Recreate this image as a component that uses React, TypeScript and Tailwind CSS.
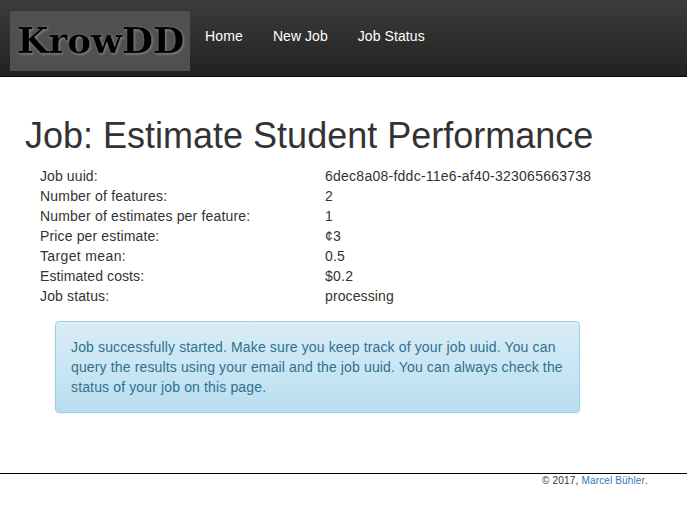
const details = [
  { label: 'Job uuid:', value: '6dec8a08-fddc-11e6-af40-323065663738', labelClass: 'tracking-[0.1px]', valueClass: 'tracking-[0.25px]' },
  { label: 'Number of features:', value: '2', labelClass: 'tracking-[0.19px]', valueClass: '' },
  { label: 'Number of estimates per feature:', value: '1', labelClass: 'tracking-[0.18px]', valueClass: '' },
  { label: 'Price per estimate:', value: '¢3', labelClass: 'tracking-[0.14px]', valueClass: 'tracking-[0.25px]' },
  { label: 'Target mean:', value: '0.5', labelClass: 'tracking-[0.36px]', valueClass: 'tracking-[0.2px]' },
  { label: 'Estimated costs:', value: '$0.2', labelClass: 'tracking-[0.09px]', valueClass: 'tracking-[0.25px]' },
  { label: 'Job status:', value: 'processing', labelClass: 'tracking-[0.14px]', valueClass: 'tracking-[0.12px]' },
];

function Logo() {
  return (
    <svg width="180" height="60" viewBox="0 0 180 60" role="img" aria-label="KrowDD" className="block bg-[#505050]">
      <defs>
        <filter id="glow" x="-10%" y="-20%" width="120%" height="150%">
          <feDropShadow dx="0.8" dy="0.9" stdDeviation="1.3" floodColor="#aaa" floodOpacity="0.65" />
        </filter>
      </defs>
      <g filter="url(#glow)">
        <text x="7.3" y="42.3" textLength="167" lengthAdjust="spacingAndGlyphs" fill="#000" stroke="#404040" strokeWidth="0.3" className="font-['DejaVu_Serif',serif] text-[36px] font-bold">KrowDD</text>
      </g>
    </svg>
  );
}

export default function App() {
  return (
    <div className="min-h-[505px] bg-white font-['Liberation_Sans',Arial,sans-serif] text-sm leading-5 text-[#333]">
      <nav className="flex h-[77px] items-start border-b border-[#080808] bg-linear-to-b from-[#3c3c3c] to-[#222] pt-[11px] pl-[10px] text-white">
        <Logo />
        <div className="flex gap-[30px] pt-[15px] pl-[15px]">
          <a className="tracking-[0.15px]">Home</a>
          <a className="tracking-[0.05px]">New Job</a>
          <a className="tracking-[0.08px]">Job Status</a>
        </div>
      </nav>
      <main className="h-[396px] px-[25px] pt-[39px]">
        <h1 className="mb-[10px] text-[36px] leading-[40px] whitespace-nowrap">Job: Estimate Student Performance</h1>
        <dl className="pl-[15px]">
          {details.map(({ label, value, labelClass, valueClass }) => (
            <div key={label} className="flex">
              <dt className={`w-[285px] ${labelClass}`}>{label}</dt>
              <dd className={valueClass}>{value}</dd>
            </div>
          ))}
        </dl>
        <div className="mt-[15px] ml-[30px] w-[525px] rounded-[4px] border border-[#9acfea] bg-linear-to-b from-[#d9edf7] to-[#b9def0] p-[15px] tracking-[0.14px] text-[#31708f] shadow-[inset_0_1px_0_rgba(255,255,255,.25),0_1px_2px_rgba(0,0,0,.05)]">
          <p className="whitespace-nowrap">Job successfully started. Make sure you keep track of your job uuid. You can</p>
          <p className="whitespace-nowrap">query the results using your email and the job uuid. You can always check the</p>
          <p>status of your job on this page.</p>
        </div>
      </main>
      <footer className="border-t border-black pr-[39px] text-right text-[10px] leading-[14px] tracking-[0.19px]">
        © 2017, <a className="tracking-[0.14px] text-[#337ab7]">Marcel Bühler</a>.
      </footer>
    </div>
  );
}
